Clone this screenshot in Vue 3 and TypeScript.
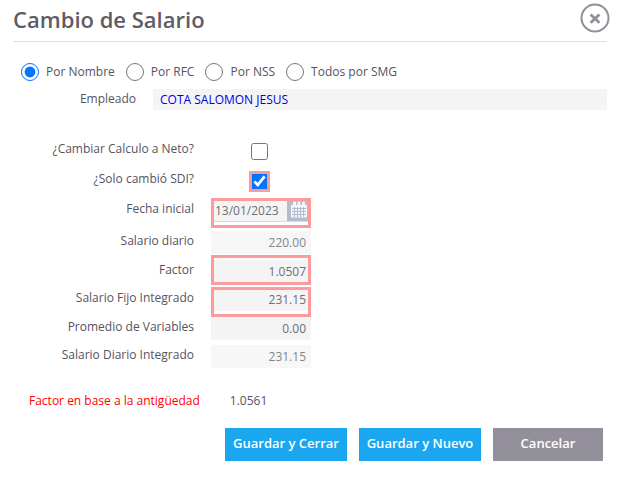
<script setup lang="ts">
import { ref } from 'vue'

interface AmountField {
  id: string
  label: string
  value: string
  tone?: 'light'
  frame?: 'frame' | 'frame frame-high'
}

const modes = [
  { id: 'nombre', label: 'Por Nombre' },
  { id: 'rfc', label: 'Por RFC' },
  { id: 'nss', label: 'Por NSS' },
  { id: 'smg', label: 'Todos por SMG' },
]
const mode = ref('nombre')
const employee = ref('COTA SALOMON JESUS')
const netCalc = ref(false)
const onlySdi = ref(true)
const startDate = ref('13/01/2023')

const amounts = ref<AmountField[]>([
  { id: 'diario', label: 'Salario diario', value: '220.00', tone: 'light' },
  { id: 'factor', label: 'Factor', value: '1.0507', frame: 'frame frame-high' },
  { id: 'fijo', label: 'Salario Fijo Integrado', value: '231.15', frame: 'frame' },
  { id: 'variables', label: 'Promedio de Variables', value: '0.00' },
  { id: 'integrado', label: 'Salario Diario Integrado', value: '231.15', tone: 'light' },
])
</script>

<template>
  <form class="dialog" @submit.prevent>
    <header class="head">
      <h1>Cambio de Salario</h1>
      <button type="button" class="close" aria-label="Cerrar">
        <svg viewBox="0 0 30 30" width="30" height="30">
          <circle cx="15" cy="15" r="13.5" fill="none" stroke="#928f9b" stroke-width="2" />
          <path d="M10.600 11.600l8.800 8.200M19.400 11.600l-8.800 8.200" stroke="#928f9b" stroke-width="2.800" />
        </svg>
      </button>
    </header>

    <div class="modes">
      <label v-for="m in modes" :key="m.id" class="mode">
        <input v-model="mode" type="radio" name="mode" :value="m.id" />
        <span>{{ m.label }}</span>
      </label>
    </div>

    <div class="employee">
      <label for="employee">Empleado</label>
      <input id="employee" v-model="employee" type="text" />
    </div>

    <div class="fields">
      <label for="net">¿Cambiar Calculo a Neto?</label>
      <span class="tick"><input id="net" v-model="netCalc" type="checkbox" /></span>

      <label for="sdi">¿Solo cambió SDI?</label>
      <span class="tick"><input id="sdi" v-model="onlySdi" type="checkbox" /><i class="tick-frame"></i></span>

      <label for="date">Fecha inicial</label>
      <div class="field frame date">
        <input id="date" v-model="startDate" type="text" />
        <button type="button" class="calendar" aria-label="Calendario">
          <svg viewBox="0 0 18 18" width="18" height="18">
            <path fill="#f4f5f8" d="M1 4h2V1.500q0-1 1.500-1t1.500 1V4h1.500V1.500q0-1 1.500-1t1.500 1V4H12V1.500q0-1 1.500-1t1.500 1V4h2v12.500H1z" />
            <path stroke="#b3bccb" d="M2 7.500h14M2 10.500h14M2 13.500h14M4.500 6v10M7.500 6v10M10.500 6v10M13.500 6v10" />
          </svg>
        </button>
      </div>

      <template v-for="a in amounts" :key="a.id">
        <label :for="a.id">{{ a.label }}</label>
        <div class="field" :class="[a.tone, a.frame]">
          <input :id="a.id" v-model="a.value" type="text" />
        </div>
      </template>
    </div>

    <p class="seniority">
      <span class="warn">Factor en base a la antigüedad</span>
      <output>1.0561</output>
    </p>

    <footer class="actions">
      <button type="submit">Guardar y Cerrar</button>
      <button type="button">Guardar y Nuevo</button>
      <button type="button" class="cancel">Cancelar</button>
    </footer>
  </form>
</template>

<style>
body {
  background: #fff;
}
</style>

<style scoped>
.dialog {
  padding: 0 12px 28px 13px;
  font: 12px/16px "Open Sans", "Noto Sans", sans-serif;
  color: #56535e;
}
.dialog *,
.frame::after {
  box-sizing: border-box;
}
input,
button {
  margin: 0;
  padding: 0;
  border: 0;
  border-radius: 0;
  font: inherit;
  color: inherit;
  background: none;
}
input[type="text"] {
  display: block;
  width: 100%;
  min-width: 0;
  outline: 0;
}
.head {
  display: flex;
  justify-content: space-between;
  height: 42px;
  border-bottom: 1px solid #dfdfe1;
}
h1 {
  margin: 4px 0 0;
  font-size: 22px;
  line-height: 30px;
  font-weight: 600;
  color: #5f5c66;
}
.close {
  height: 30px;
  margin: 3px -3px 0 0;
}
.close svg,
.calendar svg {
  display: block;
}
.modes {
  display: flex;
  gap: 11px;
  padding: 21px 0 0 8px;
}
.mode {
  display: flex;
  align-items: center;
  gap: 7px;
  height: 18px;
}
.mode input {
  width: 18px;
  height: 18px;
}
.employee {
  display: grid;
  grid-template-columns: 123px 1fr;
  column-gap: 17px;
  margin-top: 8px;
}
.employee label {
  text-align: right;
  line-height: 19px;
}
.employee input {
  height: 21px;
  padding: 0 7px;
  background: #f4f4f4;
  color: #0000e6;
}
.fields {
  display: grid;
  grid-template-columns: 181px 100px;
  grid-template-rows: 30px 32px 32px 29px 28px 29px 28px 28px;
  column-gap: 17px;
  padding-top: 27px;
}
.fields label {
  text-align: right;
  line-height: 20px;
}
.fields label[for="net"],
.fields label[for="sdi"] {
  line-height: 23px;
}
.tick {
  position: relative;
  display: block;
  width: 17px;
  height: 17px;
  margin: 6px 0 0 40px;
}
.tick input {
  display: block;
  width: 17px;
  height: 17px;
}
.tick-frame {
  position: absolute;
  inset: -2px;
  border: 3px solid #fd9a9b;
  pointer-events: none;
}
.field {
  position: relative;
  display: flex;
  height: 23px;
  background: #f4f4f4;
}
.field input {
  height: 23px;
  padding-right: 5px;
  text-align: right;
  color: #6e6e72;
}
.light {
  background: #f7f7f7;
}
.light input {
  color: #858588;
}
.frame::after {
  content: "";
  position: absolute;
  z-index: 1;
  top: -1px;
  left: 0;
  width: 100%;
  height: 30px;
  border: 3px solid #fd9a9b;
  pointer-events: none;
}
.frame-high::after {
  top: -5px;
}
.date {
  border-bottom: 1px solid #dcdcdc;
}
.date input {
  flex: 1;
  padding: 0 0 0 4px;
  text-align: left;
}
.calendar {
  flex: none;
  width: 24px;
  height: 22px;
  padding: 2px 3px;
  background: #b3bccb;
}
.seniority {
  display: flex;
  gap: 30px;
  margin: 18px 0 0 16px;
  line-height: 20px;
}
.warn {
  color: #f00;
}
.actions {
  display: flex;
  justify-content: flex-end;
  gap: 12px;
  margin: 17px 4px 0 0;
}
.actions button {
  width: 122px;
  height: 33px;
  padding-bottom: 3px;
  font-size: 13px;
  font-weight: 600;
  color: #fff;
  background: #1aa7f0;
}
.actions .cancel {
  width: 110px;
  background: #94909b;
}
</style>
